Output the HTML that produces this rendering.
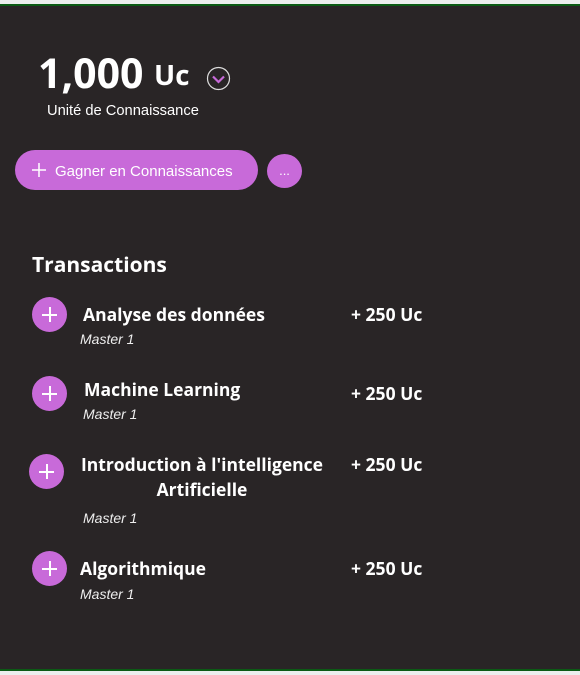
<!DOCTYPE html>
<html><head><meta charset="utf-8"><style>
*{margin:0;padding:0;box-sizing:border-box}
body{width:580px;height:675px;background:#eceeee;position:relative;overflow:hidden;font-family:"Liberation Sans",sans-serif;color:#fff}
.main{position:absolute;left:0;top:4px;width:580px;height:667px;background:#292526;border-top:2px solid #0b5a14;border-bottom:2px solid #0b5a14}
.a{position:absolute;white-space:nowrap}
.b{font-family:"Open Sans","DejaVu Sans","Liberation Sans",sans-serif;font-weight:bold}
.plus{position:absolute;width:35px;height:35px;border-radius:50%;background:#c86ad9}
.plus:before{content:"";position:absolute;left:10px;top:16.5px;width:15px;height:2px;background:#fff}
.plus:after{content:"";position:absolute;left:16.5px;top:10px;width:2px;height:15px;background:#fff}
.t{font-size:17.5px}
.m{font-size:14px;font-style:italic;color:#eee}
</style></head><body>
<div class="main">
<div class="a b" style="left:38px;top:39px;font-size:41px">1,000</div>
<div class="a b" style="left:154px;top:50px;font-size:28px">Uc</div>
<svg class="a" style="left:206px;top:60px" width="26" height="26" viewBox="0 0 26 26"><circle cx="12.5" cy="12.5" r="11" fill="none" stroke="#ddd" stroke-width="1.2"/><path d="M7 10.5l5.5 5.5 5.5-5.5" fill="none" stroke="#c86ad9" stroke-width="2.2"/></svg>
<div class="a" style="left:47px;top:97px;font-size:14.7px">Unité de Connaissance</div>
<div class="a" style="left:15px;top:144px;width:243px;height:40px;border-radius:20px;background:#c86ad9"></div>
<svg class="a" style="left:31px;top:156px" width="16" height="16"><path d="M8 1v14M1 8h14" stroke="#fff" stroke-width="1.5"/></svg>
<div class="a" style="left:55px;top:157px;font-size:15px">Gagner en Connaissances</div>
<div class="a" style="left:267px;top:148px;width:35px;height:34px;border-radius:50%;background:#c86ad9;text-align:center;font-size:13px;line-height:34px">...</div>
<div class="a b" style="left:32px;top:245px;font-size:21px">Transactions</div>

<div class="plus" style="left:32px;top:291px"></div>
<div class="a b t" style="left:83px;top:297px">Analyse des données</div>
<div class="a m" style="left:80px;top:325px">Master 1</div>
<div class="a b t" style="left:351px;top:297px">+ 250 Uc</div>

<div class="plus" style="left:32px;top:370px"></div>
<div class="a b t" style="left:84px;top:372px">Machine Learning</div>
<div class="a m" style="left:83px;top:400px">Master 1</div>
<div class="a b t" style="left:351px;top:376px">+ 250 Uc</div>

<div class="plus" style="left:29px;top:448px"></div>
<div class="a b t" style="left:72px;top:447px;text-align:center;width:260px;line-height:25px">Introduction à l'intelligence<br>Artificielle</div>
<div class="a m" style="left:83px;top:504px">Master 1</div>
<div class="a b t" style="left:351px;top:447px">+ 250 Uc</div>

<div class="plus" style="left:32px;top:545px"></div>
<div class="a b t" style="left:80px;top:551px">Algorithmique</div>
<div class="a m" style="left:80px;top:580px">Master 1</div>
<div class="a b t" style="left:351px;top:551px">+ 250 Uc</div>
</div>
</body></html>
